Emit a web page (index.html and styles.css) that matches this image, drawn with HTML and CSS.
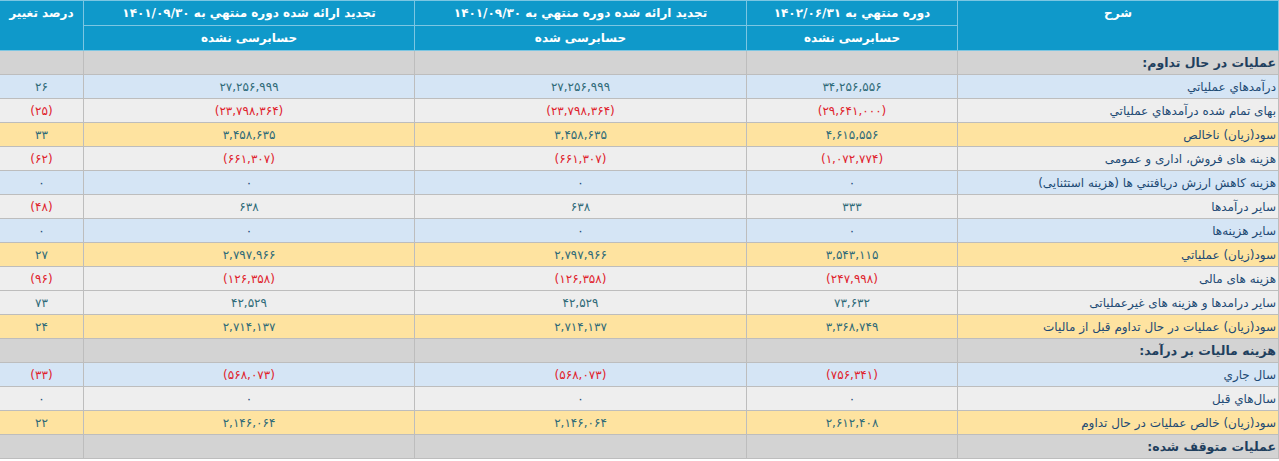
FILE: index.html
```html
<!DOCTYPE html>
<html lang="fa" dir="rtl">
<head>
<meta charset="utf-8">
<title>صورت سود و زیان</title>
<link rel="stylesheet" href="styles.css">
</head>
<body>
<table class="report">
  <colgroup>
    <col class="c-desc">
    <col class="c-cur">
    <col class="c-prev">
    <col class="c-prev">
    <col class="c-pct">
  </colgroup>
  <thead>
    <tr>
      <th rowspan="2" class="top">شرح</th>
      <th>دوره منتهي به ۱۴۰۲/۰۶/۳۱</th>
      <th>تجدید ارائه شده دوره منتهي به ۱۴۰۱/۰۹/۳۰</th>
      <th>تجدید ارائه شده دوره منتهي به ۱۴۰۱/۰۹/۳۰</th>
      <th rowspan="2" class="top">درصد تغییر</th>
    </tr>
    <tr>
      <th>حسابرسی نشده</th>
      <th>حسابرسی شده</th>
      <th>حسابرسی نشده</th>
    </tr>
  </thead>
  <tbody>
    <tr class="sec"><td class="lbl">عملیات در حال تداوم:</td><td></td><td></td><td></td><td></td></tr>
    <tr class="blue"><td class="lbl">درآمدهاي عملياتي</td><td>۳۴,۲۵۶,۵۵۶</td><td>۲۷,۲۵۶,۹۹۹</td><td>۲۷,۲۵۶,۹۹۹</td><td>۲۶</td></tr>
    <tr class="grey"><td class="lbl">بهای تمام شده درآمدهاي عملياتي</td><td class="neg">(۲۹,۶۴۱,۰۰۰)</td><td class="neg">(۲۳,۷۹۸,۳۶۴)</td><td class="neg">(۲۳,۷۹۸,۳۶۴)</td><td class="neg">(۲۵)</td></tr>
    <tr class="yel"><td class="lbl">سود(زيان) ناخالص</td><td>۴,۶۱۵,۵۵۶</td><td>۳,۴۵۸,۶۳۵</td><td>۳,۴۵۸,۶۳۵</td><td>۳۳</td></tr>
    <tr class="grey"><td class="lbl">هزینه های فروش، اداری و عمومی</td><td class="neg">(۱,۰۷۲,۷۷۴)</td><td class="neg">(۶۶۱,۳۰۷)</td><td class="neg">(۶۶۱,۳۰۷)</td><td class="neg">(۶۲)</td></tr>
    <tr class="blue"><td class="lbl">هزینه کاهش ارزش دریافتني ها (هزینه استثنایی)</td><td class="zero">۰</td><td class="zero">۰</td><td class="zero">۰</td><td class="zero">۰</td></tr>
    <tr class="grey"><td class="lbl">سایر درآمدها</td><td>۳۳۳</td><td>۶۳۸</td><td>۶۳۸</td><td class="neg">(۴۸)</td></tr>
    <tr class="blue"><td class="lbl">سایر هزینه‌ها</td><td class="zero">۰</td><td class="zero">۰</td><td class="zero">۰</td><td class="zero">۰</td></tr>
    <tr class="yel"><td class="lbl">سود(زيان) عملياتي</td><td>۳,۵۴۳,۱۱۵</td><td>۲,۷۹۷,۹۶۶</td><td>۲,۷۹۷,۹۶۶</td><td>۲۷</td></tr>
    <tr class="grey"><td class="lbl">هزینه های مالی</td><td class="neg">(۲۴۷,۹۹۸)</td><td class="neg">(۱۲۶,۳۵۸)</td><td class="neg">(۱۲۶,۳۵۸)</td><td class="neg">(۹۶)</td></tr>
    <tr class="grey"><td class="lbl">سایر درامدها و هزینه های غیرعملیاتی</td><td>۷۳,۶۳۲</td><td>۴۲,۵۲۹</td><td>۴۲,۵۲۹</td><td>۷۳</td></tr>
    <tr class="yel"><td class="lbl">سود(زيان) عمليات در حال تداوم قبل از ماليات</td><td>۳,۳۶۸,۷۴۹</td><td>۲,۷۱۴,۱۳۷</td><td>۲,۷۱۴,۱۳۷</td><td>۲۴</td></tr>
    <tr class="sec"><td class="lbl">هزینه مالیات بر درآمد:</td><td></td><td></td><td></td><td></td></tr>
    <tr class="blue"><td class="lbl">سال جاري</td><td class="neg">(۷۵۶,۳۴۱)</td><td class="neg">(۵۶۸,۰۷۳)</td><td class="neg">(۵۶۸,۰۷۳)</td><td class="neg">(۳۳)</td></tr>
    <tr class="grey"><td class="lbl">سال‌هاي قبل</td><td class="zero">۰</td><td class="zero">۰</td><td class="zero">۰</td><td class="zero">۰</td></tr>
    <tr class="yel"><td class="lbl">سود(زيان) خالص عمليات در حال تداوم</td><td>۲,۶۱۲,۴۰۸</td><td>۲,۱۴۶,۰۶۴</td><td>۲,۱۴۶,۰۶۴</td><td>۲۲</td></tr>
    <tr class="sec"><td class="lbl">عملیات متوقف شده:</td><td></td><td></td><td></td><td></td></tr>
  </tbody>
</table>
</body>
</html>
```
FILE: styles.css
```css
html, body {
  margin: 0;
  padding: 0;
  background: #ffffff;
}

body {
  font-family: "DejaVu Sans", "Noto Sans", sans-serif;
  font-size: 12px;
  color: #2f6a78;
}

.report {
  width: 1279px;
  border-collapse: collapse;
  table-layout: fixed;
  direction: rtl;
}

.c-desc { width: 321px; }
.c-cur { width: 211px; }
.c-prev { width: 332px; }
.c-prev + .c-prev { width: 331px; }
.c-pct { width: 84px; }

.report th {
  background: #0f99ca;
  color: #ffffff;
  font-weight: bold;
  font-size: 12px;
  height: 24px;
  padding: 0 4px;
  border: 1px solid #7cc6e2;
  text-align: center;
  vertical-align: middle;
}

.report th.top {
  vertical-align: top;
  padding-top: 5px;
}

.report td {
  height: 23px;
  padding: 0 4px;
  border: 1px solid #bdbdbd;
  text-align: center;
  vertical-align: middle;
  white-space: nowrap;
}

.report td.lbl {
  text-align: right;
  padding-right: 2px;
  color: #1d4a74;
}

.report td.neg {
  color: #e0222c;
}

.report td.zero {
  color: #1d4a74;
}

.report tr.sec td {
  background: #d3d3d3;
}

.report tr.sec td.lbl {
  font-weight: bold;
  font-size: 12.5px;
  color: #1f3f5e;
}

.report tr.blue td { background: #d5e5f5; }
.report tr.grey td { background: #eeeeee; }
.report tr.yel td { background: #fee3a0; }
```
